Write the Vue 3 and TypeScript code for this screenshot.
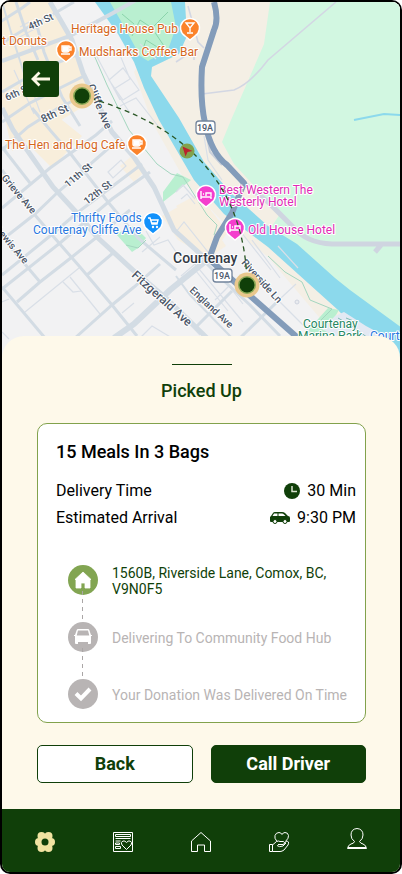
<script setup lang="ts">
interface Road { d: string; w: number }
interface StreetName { text: string; x: number; y: number; angle: number; size: number }
interface Place { text: string; x: number; y: number; kind: string; anchor?: 'start' | 'middle' | 'end' }
interface Step { text: string; icon: 'home' | 'car' | 'check'; active: boolean }

const roads: Road[] = [
  { d: 'M0 22L22 8 30 2', w: 3 },
  { d: 'M2 43L30 26 50 16 74 2', w: 3 },
  { d: 'M2 61L70 36 113 13 136 0', w: 4 },
  { d: 'M2 92L40 70 74 56 84 50', w: 3 },
  { d: 'M2 122L30 103 84 76', w: 3 },
  { d: 'M2 150L28 127 58 108 92 92', w: 3 },
  { d: 'M2 208L50 168 96 135 112 121', w: 3 },
  { d: 'M2 240L35 214 58 192 110 147', w: 3 },
  { d: 'M2 275L50 236 77 213 142 164', w: 3 },
  { d: 'M2 289L60 243 112 199 150 172', w: 3 },
  { d: 'M17 302L40 282 72 257 97 237 130 210', w: 3 },
  { d: 'M87 275L113 253', w: 3 },
  { d: 'M75 338L112 305 134 287 160 264', w: 3 },
  { d: 'M114 338L134 324 170 290 207 260', w: 6 },
  { d: 'M16 2L26 32 38 60', w: 3 },
  { d: 'M2 2L14 42 30 92', w: 2 },
  { d: 'M36 22L44 52 62 97 80 126', w: 3 },
  { d: 'M50 2L72 40 83 73 97 102 112 132 134 157 154 187 174 230 207 260', w: 5 },
  { d: 'M2 108L13 130 32 157 53 187 77 213 97 237 134 271 166 298 207 338', w: 5 },
  { d: 'M32 108L50 130 70 153 108 202 138 238 176 270', w: 3 },
  { d: 'M2 147L30 183', w: 3 },
  { d: 'M2 170L35 215 52 235 80 267 112 305 137 336', w: 3 },
  { d: 'M2 237L40 282', w: 3 },
  { d: 'M2 287L45 338', w: 3 },
  { d: 'M176 276L190 295 232 338', w: 2 },
  { d: 'M196 327L232 291', w: 3 },
  { d: 'M207 264L223 280 250 305 280 336', w: 3 },
  { d: 'M240 338L277 302', w: 3 },
]

const lanes =
  'M25 312L79 268M63 282l10 10 8-1M70 277l30 37M20 27l9-5M18 38l24-13M28 78l12 34M14 70l20 44M96 55l24 45M96 55h24l10 24-16 10 16 24M109 80l14-12 16 22-16 10zM120 106l16-8 22 28M140 44l16 15M108 172l13-12 5 6-13 12zM176 192l7-7 12 14M181 199l6-5 8 10M146 231l8 14 14-5 12 18M142 252l18-15M176 232l8-10 28 35M150 283l50 52M181 276l14-12 48 58M196 271l32 40M215 300l14-14 14 18M140 338l12-12 20 12M122 313l12-10M2 332l7 7M2 302l7-3M241 232l30 38M252 240l28 38M278 246l20 22M278 300l36 36M268 310l28-26M222 180l-14-20-4-24'

const streetNames: StreetName[] = [
  { text: '4th St', x: 30, y: 30, angle: -24, size: 10 },
  { text: '6th St', x: 7, y: 101, angle: -25, size: 10 },
  { text: '8th St', x: 43, y: 123, angle: -25, size: 11 },
  { text: 'Cliffe Ave', x: 87, y: 86, angle: 67, size: 11 },
  { text: '11th St', x: 68, y: 188, angle: -40, size: 10 },
  { text: '12th St', x: 87, y: 205, angle: -38, size: 10 },
  { text: 'Grieve Ave', x: 1, y: 178, angle: 50, size: 10 },
  { text: 'Lewis Ave', x: -5, y: 230, angle: 50, size: 10 },
  { text: 'Fitzgerald Ave', x: 131, y: 276, angle: 42, size: 12 },
  { text: 'England Ave', x: 189, y: 291, angle: 43, size: 10 },
  { text: 'Riverside Ln', x: 241, y: 263, angle: 48, size: 10 },
]

const places: Place[] = [
  { text: 'Tim Hortons Best Donuts', x: 47, y: 45, kind: 'food', anchor: 'end' },
  { text: 'Heritage House Pub', x: 71, y: 33, kind: 'food' },
  { text: 'Mudsharks Coffee Bar', x: 79, y: 56, kind: 'food' },
  { text: 'The Hen and Hog Cafe', x: 5, y: 149, kind: 'food' },
  { text: 'Thrifty Foods', x: 71, y: 222, kind: 'shop' },
  { text: 'Courtenay Cliffe Ave', x: 33, y: 234, kind: 'shop' },
  { text: 'Best Western The', x: 219, y: 194, kind: 'hotel' },
  { text: 'Westerly Hotel', x: 219, y: 206, kind: 'hotel' },
  { text: 'Old House Hotel', x: 248, y: 234, kind: 'hotel' },
  { text: 'Courtenay', x: 303, y: 328, kind: 'park' },
  { text: 'Marina Park', x: 298, y: 340, kind: 'park' },
  { text: 'Courtenay', x: 370, y: 340, kind: 'shop' },
]

const steps: Step[] = [
  { text: '1560B, Riverside Lane, Comox, BC, V9N0F5', icon: 'home', active: true },
  { text: 'Delivering To Community Food Hub', icon: 'car', active: false },
  { text: 'Your Donation Was Delivered On Time', icon: 'check', active: false },
]
</script>

<template>
  <div class="phone">
    <header class="map">
      <svg class="map-art" viewBox="2 2 398 358" preserveAspectRatio="xMidYMid slice" role="img" aria-label="Delivery route map">
        <rect width="402" height="362" fill="#f2f2f3" />
        <g fill="#f8eedb">
          <path d="M2 2h50l20 38 12 36 10 24-54 33-28 18L2 104z" />
          <path d="M14 128l36-22 12 14 20 16-30 32-20-20z" />
          <path d="M120 166l14-12 12 16-12 12zM162 216l32-18 32 48-18 12-30-18zM176 206l22-12 30 38-10 14z" opacity=".75" />
        </g>
        <path fill="#f4efe5" d="M178 2h224v358H372L330 330 268 257 222 221 188 186 152 122 134 72z" />
        <path fill="#d2f7e1" d="M270 2h132v340L268 232l12-18-46-50-12-22 9-22 33-76z" />
        <path fill="#8cd9ec" d="M95 2H185L187 36 179 54 152 67 151 76 179 118 204 162 231 193 268 226 297 244 335 278 350 290 402 328V362H390L361 335 338 310 268 247 240 226 224 214 194 180 159 120 144 88 134 62 118 34z" />
        <path fill="#e3e9f3" d="M326 320l18-8 22 14 26 14h-70z" />
        <path fill="#b9efd0" d="M110 2h61l5 25-8 23-20 11-8-5-14-26zM163 192l14-19 14 7-28 22zM116 234l18-8 12 12-8 10-6 4z" />
        <path fill="#b9efd0" d="M310 328l18-20 11 2-3 5-14 14 20 12h-40z" />
        <path d="M132 36l8-16 12 8 16-16M142 52l4-12 16 10M152 28l12 18M122 14l12 10" stroke="#8bd4ab" fill="none" />
        <path d="M338 318l14 8 16 12M346 318l10 4" stroke="#80bcb6" fill="none" />
        <path d="M354 120l30-6 18 1" stroke="#8cd9ec" stroke-width="2" fill="none" />
        <path :d="lanes" stroke="#d9dfe7" stroke-width="1.2" fill="none" />
        <path v-for="road in roads" :key="road.d" :d="road.d" :stroke-width="road.w" stroke="#d3dce4" fill="none" />
        <path d="M94 55l13 30 22 45 28 34 14 10 12 3 24 38 10 10-3 10M268 256l17 16 17 10 8 18 22 9-14 14M146 240l-8 8-12-3" stroke="#a4d6bf" fill="none" />
        <path d="M336 2L268 60q-18 24-34 30l-32 4M188 6l10 36 6 6M194 60v-10l-18 12" stroke="#d3d7e3" stroke-width="1.6" fill="none" />
        <path d="M204 122l6 30 12 13" stroke="#c9d0db" stroke-width="2" fill="none" />
        <path d="M245 184l23 18 24 24q14 17 40 18h70M375 252l6-7" stroke="#cfd5e0" stroke-width="5" fill="none" />
        <path d="M214 2q5 18 0 28L202 67q-2 34 3 56 6 30 22 42l17 18-12 30-15 24-8 22 38 34 51 45" stroke="#839cba" stroke-width="6" fill="none" stroke-linejoin="round" />
        <circle cx="297" cy="302" r="2" fill="#e9ebef" stroke="#ced3de" />
        <g v-for="(y, i) in [127, 275]" :key="y">
          <rect :x="i ? 213 : 196" :y="y - 6" width="19" height="13" rx="3" fill="#fff" stroke="#72849c" stroke-width="1.3" />
          <text class="shield" :x="i ? 222 : 205" :y="y + 4">19A</text>
        </g>
        <text v-for="name in streetNames" :key="name.text" class="street" :font-size="name.size" :transform="`translate(${name.x} ${name.y}) rotate(${name.angle})`">{{ name.text }}</text>
        <text class="city" x="173" y="263">Courtenay</text>
        <text v-for="place in places" :key="place.text + place.x" :class="['place', place.kind]" :x="place.x" :y="place.y" :text-anchor="place.anchor ?? 'start'">{{ place.text }}</text>
        <g stroke="#fff" stroke-width="1.5">
          <path d="M66 62l-5-4a9.5 9.5 0 1 1 10 0z" fill="#fb832b" />
          <path d="M190 40l-5-4a9.5 9.5 0 1 1 10 0z" fill="#fb832b" />
          <path d="M137 156l-5-4a9.5 9.5 0 1 1 10 0z" fill="#fb832b" />
          <path d="M153 234l-5-4a9.5 9.5 0 1 1 10 0z" fill="#1191fb" />
          <path d="M206 207l-5-4a9.5 9.5 0 1 1 10 0z" fill="#f43fcd" />
          <path d="M235 240l-5-4a9.5 9.5 0 1 1 10 0z" fill="#f43fcd" />
        </g>
        <g fill="none" stroke="#fff" stroke-width="1.4">
          <g v-for="p in [[66, 50], [137, 144]]" :key="p[0]" :transform="`translate(${p[0]} ${p[1]})`">
            <path d="M-4-4h7v4q0 2-2 2h-3q-2 0-2-2zM3-3h2v3H3M-5 4h9" />
            <path d="M-3-3h5v4h-5z" fill="#fff" />
          </g>
          <path d="M186 23h8l-4 5zM190 28v4M187 33h6" />
          <path d="M148 218h2l2 6h5l1-4h-7M152 220h6M151 223h6" />
          <circle cx="153" cy="227" r=".5" /><circle cx="157" cy="227" r=".5" />
          <path v-for="p in [[206, 195], [235, 228]]" :key="p[0]" :transform="`translate(${p[0]} ${p[1]})`" d="M-5-4v8M-5 2H5v2M5 1v-3H0v3M-3-1h1" />
        </g>
        <path d="M82 96Q245 140 247 285" stroke="#2a5725" stroke-width="1.3" stroke-dasharray="5 4" fill="none" />
        <circle cx="187" cy="151" r="7.5" fill="#82a24c" />
        <path d="M182.500 146.500l10 4.500-5 1-2 4.500z" fill="#b9222d" />
        <g v-for="p in [[82, 96], [247, 285]]" :key="p[0]">
          <circle :cx="p[0]" :cy="p[1]" r="12.5" fill="#eac88d" />
          <circle :cx="p[0]" :cy="p[1]" r="9" fill="#8caa57" />
          <circle :cx="p[0]" :cy="p[1]" r="7.5" fill="#103f09" />
        </g>
      </svg>
      <button class="go-back" type="button" aria-label="Go back">
        <svg width="20" height="16" viewBox="0 0 20 16"><path d="M8.500 1.500L2 8l6.500 6.500M2 8h17" fill="none" stroke="#fdf8e6" stroke-width="2.800" /></svg>
      </button>
    </header>

    <main class="sheet">
      <div class="handle"></div>
      <h1>Picked Up</h1>
      <section class="card">
        <h2>15 Meals In 3 Bags</h2>
        <dl>
          <div class="fact">
            <dt>Delivery Time</dt>
            <dd>
              <svg width="16" height="16" viewBox="0 0 16 16"><circle cx="8" cy="8" r="8" fill="#103f09" /><path d="M8 3v5.500h5" fill="none" stroke="#d9e2cf" stroke-width="1.500" /></svg>
              30 Min
            </dd>
          </div>
          <div class="fact">
            <dt>Estimated Arrival</dt>
            <dd>
              <svg width="20" height="12" viewBox="0 0 20 12">
                <path d="M1 4L3 1Q3.500 0 5 0h7q2 0 3 1l3 3q2 0 2 2v3q0 1-1 1H1Q0 10 0 9V5z" fill="#103f09" />
                <path d="M4 1.500h3.500V4H2.500zM8.500 1.500H12q1 0 2 1L15.500 4h-7z" fill="#fff" />
                <circle cx="5" cy="9.500" r="2" fill="#fff" stroke="#103f09" /><circle cx="15" cy="9.500" r="2" fill="#fff" stroke="#103f09" />
              </svg>
              9:30 PM
            </dd>
          </div>
        </dl>
        <ol class="steps">
          <li v-for="step in steps" :key="step.icon" :class="{ active: step.active }">
            <span class="dot">
              <svg v-if="step.icon === 'home'" width="18" height="18" viewBox="0 0 18 18"><path d="M9 1l8 7.500h-1V17h-5v-5H7v5H2V8.500H1z" fill="#fff" stroke="#fff" stroke-width=".8" stroke-linejoin="round" /></svg>
              <svg v-else-if="step.icon === 'car'" width="18" height="16" viewBox="0 0 18 16"><path d="M4 0h10q1 0 1.300 1L17 6h1v1h-1v7q0 1-1 1h-2v-2H4v2H2q-1 0-1-1V7H0V6h1l1.700-5Q3 0 4 0zM4 1.500L2.700 6.500h12.600L14 1.500z" fill="#fff" fill-rule="evenodd" /></svg>
              <svg v-else width="18" height="16" viewBox="0 0 18 16"><path d="M2 7.500l5 5L16 3" fill="none" stroke="#fff" stroke-width="4" /></svg>
            </span>
            <span class="step-text">{{ step.text }}</span>
          </li>
        </ol>
      </section>
      <div class="actions">
        <button type="button">Back</button>
        <button type="button" class="primary">Call Driver</button>
      </div>
    </main>

    <nav>
      <a href="#deliveries" aria-label="Deliveries">
        <svg width="20" height="20" viewBox="0 0 20 20">
          <g fill="#f1e3a1"><circle cx="6.500" cy="4" r="4" /><circle cx="13.500" cy="4" r="4" /><circle cx="4" cy="10" r="4" /><circle cx="16" cy="10" r="4" /><circle cx="6.500" cy="16" r="4" /><circle cx="13.500" cy="16" r="4" /><circle cx="10" cy="10" r="7" /></g>
          <circle cx="10" cy="10" r="3.500" fill="#103f09" />
        </svg>
      </a>
      <a href="#listings" aria-label="Listings">
        <svg class="line" width="20" height="20" viewBox="0 0 20 20"><path d="M.5.5h19v19H.5zM2.500 2.500h15v2h-15zM2.500 6.500h15M2.500 9h5M2.500 11h4v1.500h-4zM2.500 14.500h5v2h-5zM13.500 17.500L9 13q-2-3 1-4 2-.5 3.500 1.500Q15 8.500 17 9q3 1 1 4z" /></svg>
      </a>
      <a href="#home" aria-label="Home">
        <svg class="line" width="20" height="20" viewBox="0 0 20 20"><path d="M.5 9L10 .5 19.500 9v10.500h-6V13h-7v6.500h-6z" /></svg>
      </a>
      <a href="#donate" aria-label="Donate">
        <svg class="line" width="20" height="20" viewBox="0 0 20 20"><path d="M8 9.500Q5 6 6 3.500q1-3 4-3 2 0 3 2 1-2 3-2 3 0 3.500 3Q20 6 16.500 9.500M.5 12.500h3v7h-3zM3.500 13l4-3.500q2-1 3.500 0h3.500q1 .5 1 1.500t-1.500 1.500H9M15.500 11l2-1.500q1.500-.5 2 .500t-.5 3L15 18q-2 1.500-4 1.500H3.500M8 13.500q2 2 6 .5l3-3" /></svg>
      </a>
      <a href="#profile" aria-label="Profile" class="profile">
        <svg class="line" width="20" height="22" viewBox="0 0 20 22"><path d="M7.500 13.500Q4 11 4 7q0-6 6-6.500Q16 1 16 7q0 4-3.500 6.500 1 2 3.500 2.500 3 1 3.500 4.500H.5Q1 17 4 16q3-.5 3.500-2.500zM1 19.500h18" /></svg>
      </a>
    </nav>
  </div>
</template>

<style>
body {
  background: #fff;
}
</style>

<style scoped>
* {
  box-sizing: border-box;
}
.phone {
  display: flex;
  flex-direction: column;
  min-height: 100vh;
  overflow: hidden;
  border: 2px solid #000;
  border-radius: 10px;
  background: #fef9ea;
  color: #000;
  font-family: Roboto, "Liberation Sans", sans-serif;
}
.map {
  position: relative;
  height: 358px;
}
.map-art {
  display: block;
  width: 100%;
  height: 100%;
}
.map text {
  paint-order: stroke;
  stroke: #fff;
  stroke-width: 2px;
  stroke-linejoin: round;
}
.street {
  fill: #4b5668;
  font-weight: 500;
}
.city {
  fill: #333a45;
  font-size: 14px;
  font-weight: 500;
}
.place {
  font-size: 12px;
}
.food {
  fill: #d5661c;
}
.shop {
  fill: #2878e0;
}
.hotel {
  fill: #e02bb5;
}
.park {
  fill: #278762;
}
.map .shield {
  fill: #4c596c;
  stroke: none;
  font-size: 9px;
  font-weight: 500;
  text-anchor: middle;
}
.go-back {
  position: absolute;
  top: 59px;
  left: 21px;
  display: grid;
  place-items: center;
  width: 36px;
  height: 36px;
  padding: 0;
  border: 0;
  border-radius: 3px;
  background: #103f09;
}
.sheet {
  position: relative;
  flex: 1;
  margin-top: -24px;
  padding: 28px 34px 26px 35px;
  border-radius: 22px 22px 0 0;
  background: #fef9ea;
}
.handle {
  width: 60px;
  height: 1px;
  margin: 0 auto;
  background: #103f09;
}
h1 {
  margin: 14px 0 20px;
  color: #103f09;
  font-size: 18px;
  font-weight: 500;
  line-height: 24px;
  text-align: center;
}
.card {
  min-height: 300px;
  padding: 16px 9px 12px 18px;
  border: 1px solid #82a24c;
  border-radius: 10px;
  background: #fff;
}
h2 {
  margin: 0 0 13px;
  font-size: 18px;
  font-weight: 500;
  line-height: 24px;
}
dl {
  margin: 0;
}
.fact,
dd {
  display: flex;
  align-items: center;
}
.fact {
  justify-content: space-between;
  font-size: 16px;
  line-height: 27px;
}
dd {
  gap: 7px;
  margin: 0;
}
.steps {
  margin: 34px 0 0;
  padding: 0 0 0 12px;
  list-style: none;
}
.steps li {
  position: relative;
  display: flex;
  align-items: flex-start;
  gap: 14px;
  min-height: 57px;
  color: #b8b4b4;
  font-size: 14px;
  line-height: 16px;
}
.steps li:last-child {
  min-height: 30px;
}
.steps li:not(:last-child)::after {
  content: "";
  position: absolute;
  top: 26px;
  left: 14px;
  width: 1px;
  bottom: 2px;
  background: repeating-linear-gradient(#aaa6a6 0 4px, transparent 4px 8px);
}
.dot {
  display: grid;
  flex: none;
  place-items: center;
  width: 30px;
  height: 30px;
  border-radius: 50%;
  background: #b8b4b4;
}
.active .dot {
  background: #82a552;
}
.step-text {
  padding-top: 8px;
}
.steps .active {
  color: #103f09;
}
.active .step-text {
  padding-top: 0;
}
.actions {
  display: flex;
  gap: 18px;
  margin-top: 22px;
}
.actions button {
  flex: 1;
  height: 38px;
  padding: 0;
  border: 1px solid #103f09;
  border-radius: 5px;
  background: #fff;
  color: #103f09;
  font: 700 18px/24px Roboto, "Liberation Sans", sans-serif;
}
.actions .primary {
  background: #103f09;
  color: #fff;
}
nav {
  display: flex;
  align-items: center;
  justify-content: space-between;
  height: 63px;
  padding: 3px 33px 0;
  background: #103f09;
}
nav a,
nav svg {
  display: block;
}
.profile {
  padding-bottom: 6px;
}
.line {
  fill: none;
  stroke: #fff;
  stroke-width: 1px;
}
</style>
